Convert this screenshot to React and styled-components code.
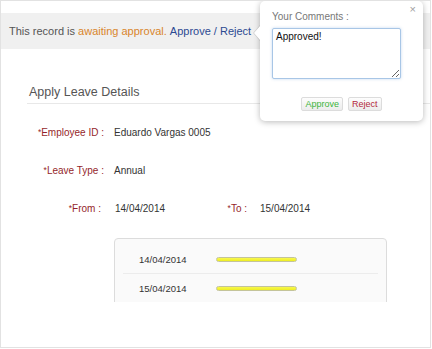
import React from "react";
import styled, { createGlobalStyle } from "styled-components";

const Global = createGlobalStyle`
  html, body { margin: 0; padding: 0; background: #fff; }
  body { font-family: "Liberation Sans", Helvetica, Arial, sans-serif; }
  * { box-sizing: border-box; }
`;

const Frame = styled.div`
  position: relative;
  width: 431px;
  height: 348px;
  border: 1px solid #e2e2e2;
  padding-top: 12px;
  overflow: hidden;
  background: #fff;
`;

const Banner = styled.div`
  height: 36px;
  background: #f0f0f0;
  padding-left: 8px;
  display: flex;
  align-items: center;
  font-size: 11px;
  color: #555;
  white-space: nowrap;
`;

const Tone = styled.span`
  color: ${(p) => (p.$tone === "warn" ? "#d9852c" : p.$tone === "link" ? "#2c4a92" : "#555")};
`;

const Section = styled.div`
  margin-left: 26px;
  margin-top: 35px;
`;

const Heading = styled.h2`
  margin: 0;
  font-weight: normal;
  font-size: 12.5px;
  line-height: 16px;
  color: #555;
  padding: 0 0 3px 2px;
  border-bottom: 1px solid #e8e8e8;
`;

const Form = styled.div`
  display: flex;
  flex-direction: column;
  gap: 24px;
  margin-top: 21px;
  padding-left: 4px;
`;

const Row = styled.div`
  display: flex;
  align-items: center;
  height: 14px;
`;

const Label = styled.div`
  width: ${(p) => p.$w || 73}px;
  flex: none;
  text-align: right;
  white-space: nowrap;
  font-size: 10px;
  color: #951f2b;
`;

const Star = styled.span`
  font-size: 8.5px;
  vertical-align: 1px;
`;

const Value = styled.div`
  width: ${(p) => (p.$w ? `${p.$w}px` : "auto")};
  flex: none;
  margin-left: ${(p) => p.$gap || 10}px;
  font-size: 10px;
  color: #333;
  white-space: nowrap;
`;

const Clip = styled.div`
  margin: 23px 0 0 113px;
  width: 273px;
  height: 64px;
  overflow: hidden;
`;

const DaysBox = styled.div`
  height: 90px;
  border: 1px solid #dcdcdc;
  border-radius: 4px;
  background: #fafafa;
  padding: 6px 8px 0 8px;
`;

const DayRow = styled.div`
  display: flex;
  align-items: center;
  height: 29px;
  padding-left: 16px;
  border-bottom: ${(p) => (p.$last ? "none" : "1px solid #ececec")};
`;

const DayDate = styled.div`
  width: 77px;
  font-size: 9.5px;
  color: #333;
`;

const Bar = styled.div`
  width: 81px;
  height: 5px;
  border: 1px solid #c4c49a;
  border-radius: 3px;
  background: linear-gradient(#f8f850, #eeee22);
`;

const Popover = styled.div`
  position: absolute;
  top: 0;
  left: 259px;
  width: 163px;
  height: 120px;
  background: #fff;
  border-radius: 5px;
  box-shadow: 0 1px 6px rgba(0, 0, 0, 0.28);
  padding: 10px 12px 0 12px;
  display: flex;
  flex-direction: column;

  &::before {
    content: "";
    position: absolute;
    left: -7px;
    top: 24px;
    border-style: solid;
    border-width: 8px 7px 8px 0;
    border-color: transparent rgba(0, 0, 0, 0.12) transparent transparent;
  }
  &::after {
    content: "";
    position: absolute;
    left: -6px;
    top: 25px;
    border-style: solid;
    border-width: 7px 6px 7px 0;
    border-color: transparent #fff transparent transparent;
  }
`;

const Close = styled.span`
  position: absolute;
  top: 3px;
  right: 7px;
  font-size: 11px;
  line-height: 11px;
  color: #a0a0a0;
`;

const PopLabel = styled.div`
  font-size: 10px;
  line-height: 12px;
  color: #777;
`;

const Comment = styled.textarea`
  margin-top: 5px;
  width: 129px;
  height: 51px;
  border: 1px solid #a8c6e6;
  border-radius: 2px;
  box-shadow: 0 0 3px rgba(120, 165, 220, 0.45);
  padding: 2px 3px;
  font-family: "Liberation Sans", Helvetica, Arial, sans-serif;
  font-size: 10px;
  color: #111;
  resize: both;
  outline: none;
`;

const Actions = styled.div`
  display: flex;
  justify-content: center;
  gap: 5px;
  margin-top: 18px;
`;

const Btn = styled.button`
  height: 14px;
  padding: 0 ${(p) => p.$pad || 3}px;
  border: 1px solid #dcdcdc;
  border-radius: 2px;
  background: linear-gradient(#fdfdfd, #ececec);
  font-family: "Liberation Sans", Helvetica, Arial, sans-serif;
  font-size: 9px;
  line-height: 12px;
  color: ${(p) => p.$color};
`;

export default function App() {
  return (
    <>
      <Global />
      <Frame>
        <Banner>
          <Tone>This record is&nbsp;</Tone>
          <Tone $tone="warn">awaiting approval.&nbsp;</Tone>
          <Tone $tone="link">Approve / Reject</Tone>
        </Banner>
        <Section>
          <Heading>Apply Leave Details</Heading>
          <Form>
            <Row>
              <Label><Star>*</Star>Employee ID :</Label>
              <Value>Eduardo Vargas 0005</Value>
            </Row>
            <Row>
              <Label><Star>*</Star>Leave Type :</Label>
              <Value>Annual</Value>
            </Row>
            <Row>
              <Label $w={70}><Star>*</Star>From :</Label>
              <Value $gap={14} $w={111}>14/04/2014</Value>
              <Label $w={21}><Star>*</Star>To :</Label>
              <Value $gap={13}>15/04/2014</Value>
            </Row>
          </Form>
        </Section>
        <Clip>
          <DaysBox>
            <DayRow>
              <DayDate>14/04/2014</DayDate>
              <Bar />
            </DayRow>
            <DayRow $last>
              <DayDate>15/04/2014</DayDate>
              <Bar />
            </DayRow>
          </DaysBox>
        </Clip>
        <Popover>
          <Close>×</Close>
          <PopLabel>Your Comments :</PopLabel>
          <Comment defaultValue="Approved!" />
          <Actions>
            <Btn $color="#3cb43c">Approve</Btn>
            <Btn $color="#b3283c">Reject</Btn>
          </Actions>
        </Popover>
      </Frame>
    </>
  );
}
